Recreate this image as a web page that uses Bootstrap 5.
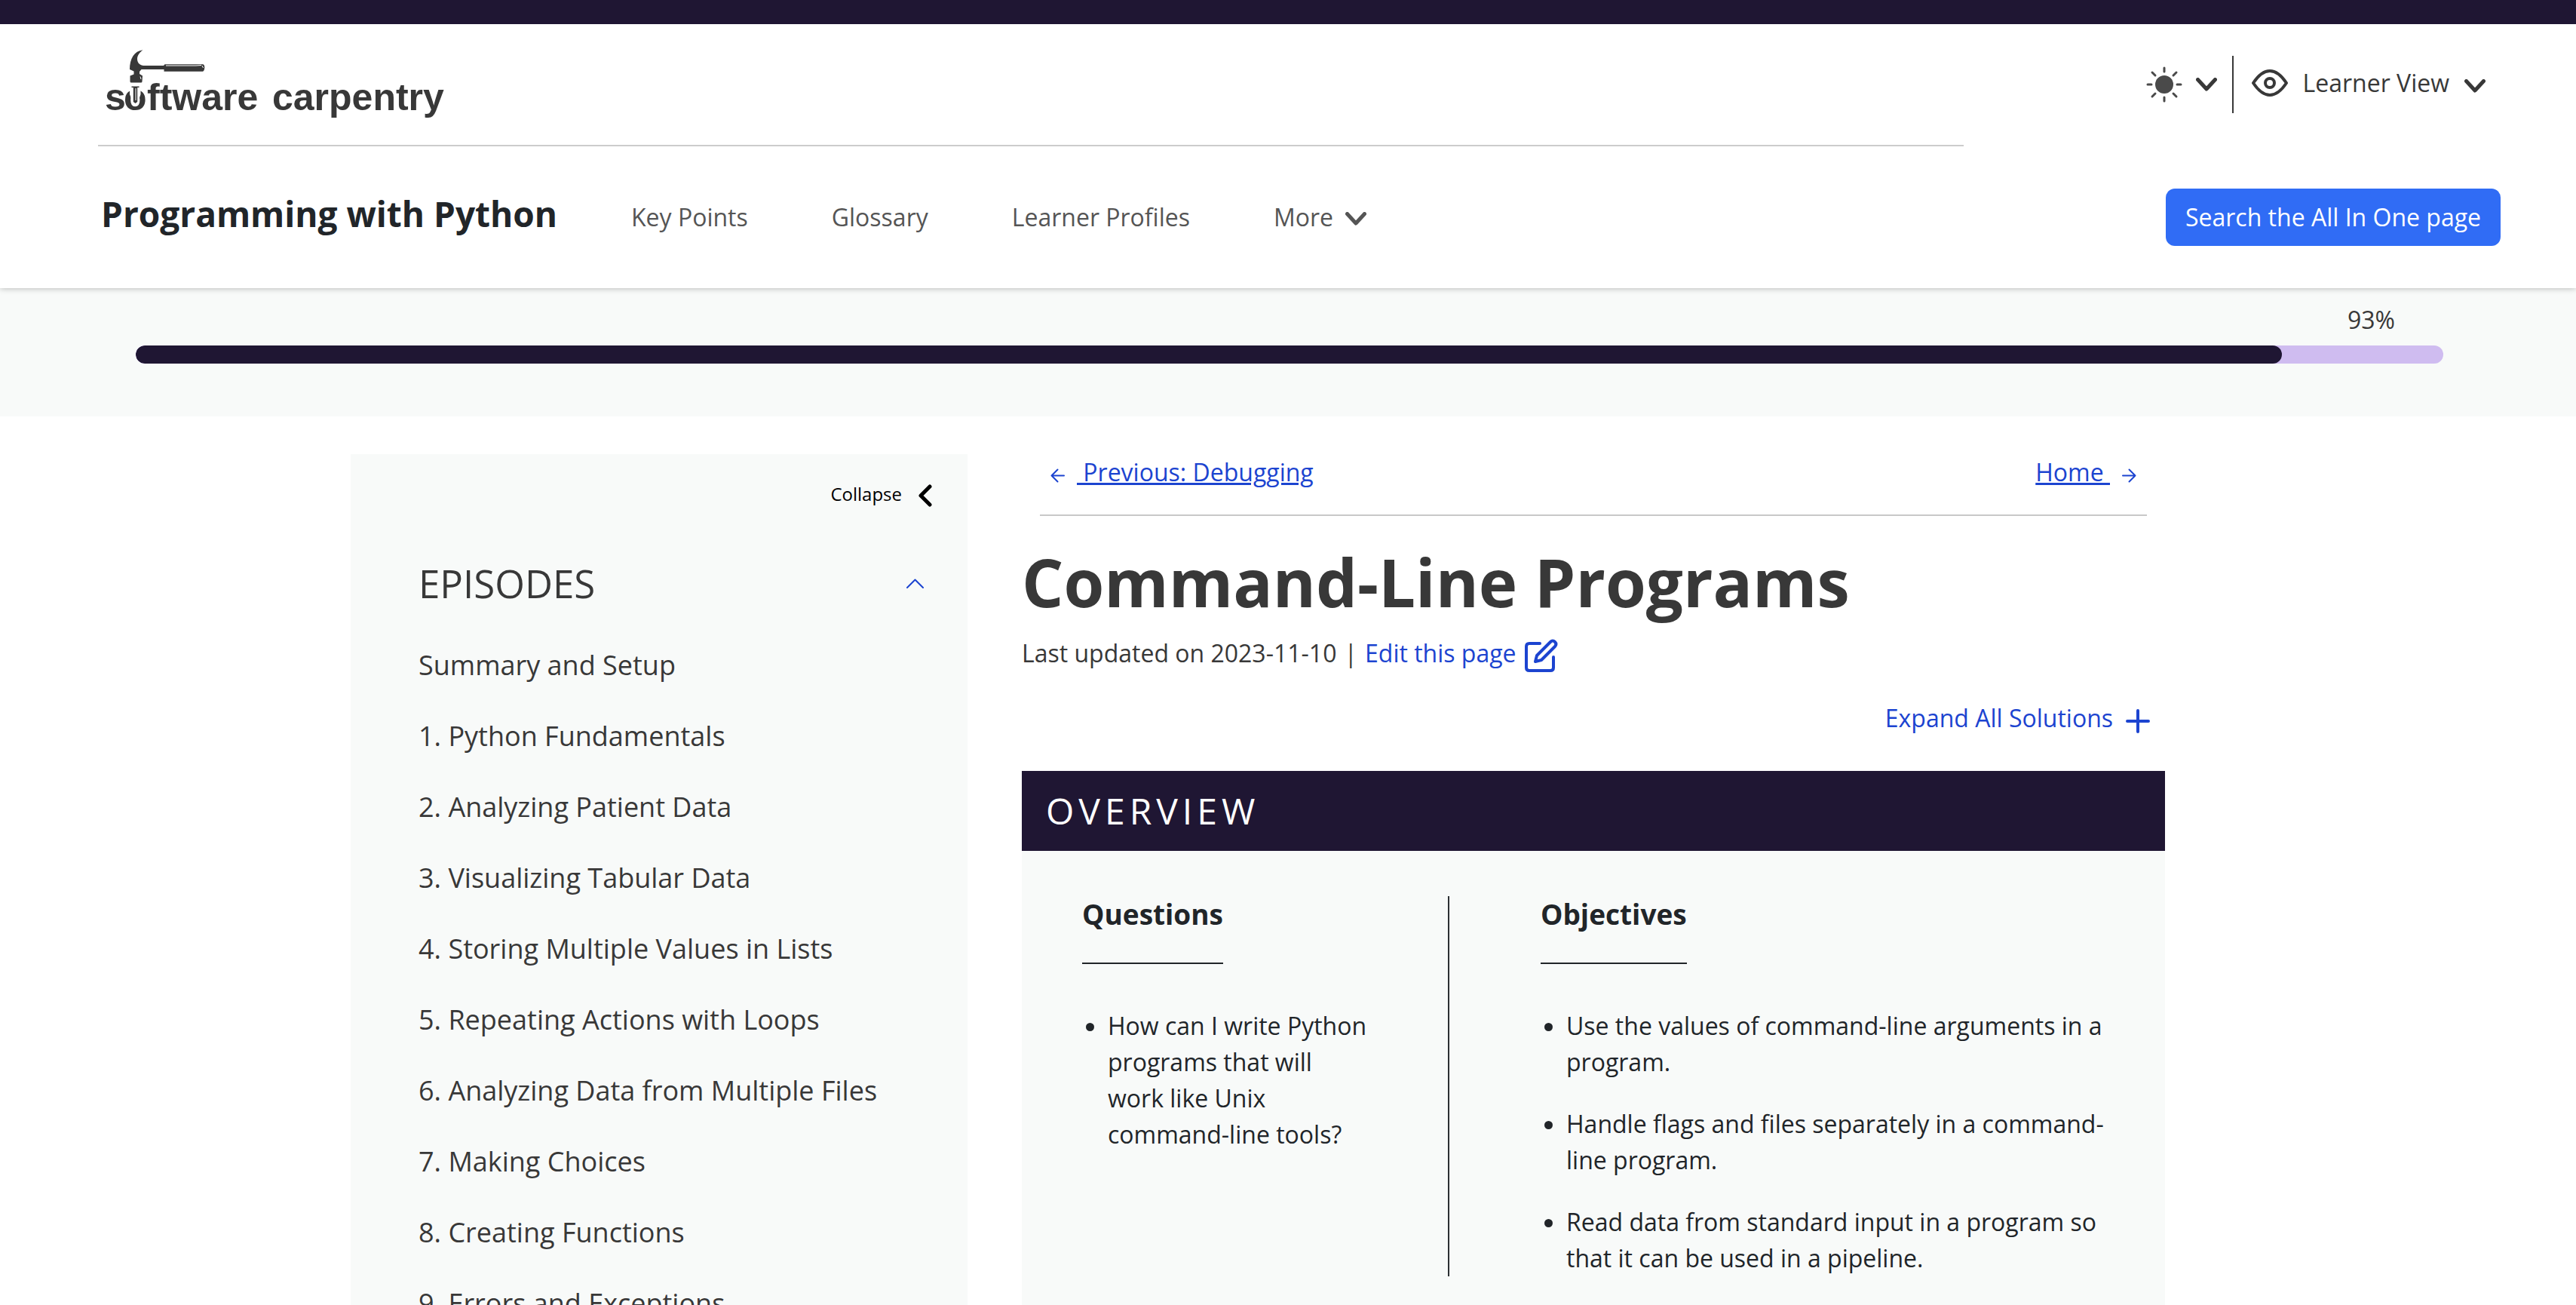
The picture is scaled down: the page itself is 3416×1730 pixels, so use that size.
<!DOCTYPE html>
<html lang="en">
<head>
<meta charset="utf-8">
<meta name="viewport" content="width=device-width, initial-scale=1">
<title>Programming with Python: Command-Line Programs</title>
<link href="https://cdn.jsdelivr.net/npm/bootstrap@5.3.0/dist/css/bootstrap.min.css" rel="stylesheet">
<style>
:root{--ink:#383838;--night:#1f1633;--mist:#f8faf9;--link:#1c44d0}
body{font-family:"Open Sans","Noto Sans",sans-serif;font-size:32px;line-height:48px;color:var(--ink)}
svg{flex:none;display:block}
.btn{font-size:inherit;line-height:inherit;color:inherit}
.ln{fill:none;stroke:currentColor;stroke-linecap:round;stroke-linejoin:round}

.site-header{border-top:32px solid var(--night);box-shadow:0 0 8px rgba(0,0,0,.3);position:relative;z-index:2}
.brand-row{padding:0 120px 0 130px}
.brand-line{border-bottom:2px solid #ccc;height:162px;margin-right:242px}
.tools{height:160px}
.tools .theme{gap:18px;padding:0 20px 0 0}
.tools .view{gap:20px;padding:0 0 4px 24px}
.tools .rule{width:2px;height:76px;background:var(--ink)}
.nav-row{padding:0 100px 0 134px;height:188px}
.lesson-title{font-size:46px;line-height:56px;font-weight:700;color:#212529;padding-bottom:10px;margin-right:98px}
.main-links{gap:111px}
.main-links a,.main-links .btn{color:#555;text-decoration:none;padding:0;border:0}
.btn-find{background:#306cf5;color:#fff;font-weight:500;border:0;border-radius:12px;padding:14px 26px}

.progress-strip{background:var(--mist);padding:18px 176px 70px 180px}
.progress-strip .pct{padding-right:64px;margin-bottom:10px}
.progress{height:24px;border-radius:12px;background:#cfbcf0}
.progress-bar{background:var(--night);border-radius:12px}

.page-main{max-width:2640px;padding:50px 157px 0 77px;gap:72px}
.side{flex:0 0 818px;background:var(--mist);padding:35px 0 80px 90px}
.collapse-btn{font-size:24px;line-height:36px;color:#000;gap:22px;margin-right:47px}
.side-head{margin:70px 58px 52px 0}
.side-head h2{font-size:51px;line-height:60px;font-weight:400;margin:0}
.side ul a{display:block;font-size:36px;line-height:54px;margin-bottom:40px;color:var(--ink);text-decoration:none}

.pager{margin:0 24px;padding:0 14px 32px;border-bottom:2px solid #c8c8c8}
.pager a{color:var(--link);text-decoration-thickness:3px;text-underline-offset:2px}
.pager svg{color:var(--link);margin-top:8px}
h1.chapter{font-size:87px;line-height:104px;font-weight:700;margin:35px 0 19px}
.updated{gap:10px;height:48px}
.edit{color:var(--link);text-decoration:none;gap:11px}
.edit svg{margin-top:6px}
.expand{color:var(--link);gap:17px;margin:38px 20px 46px 0}
.expand svg{margin-top:8px}
.over-head{background:var(--night);color:#fff;font-size:48px;line-height:58px;font-weight:400;letter-spacing:6px;padding:24px 32px;margin:0}
.over-body{background:var(--mist);color:#212529;padding:60px 71px 80px 80px}
.over-body h3{display:inline-block;font-size:37px;line-height:48px;font-weight:700;padding-bottom:40px;border-bottom:2px solid #212529;margin:0 0 58px}
.over-body ul{padding-left:34px;margin:0}
.over-body li+li{margin-top:34px}
.questions{flex:0 0 487px;border-right:2px solid #2c3033;padding-right:104px;margin-right:121px}
</style>
</head>
<body class="vh-100 overflow-hidden bg-white">

<header class="site-header bg-white">
  <div class="brand-row d-flex">
    <div class="brand-line flex-grow-1 d-flex align-items-center">
      <a href="#" aria-label="Software Carpentry">
        <svg width="470" height="115" viewBox="0 0 470 115">
          <g font-family="Liberation Sans, Arial, sans-serif" font-weight="700" font-size="50" fill="#383838">
            <text y="91"><tspan x="9">s</tspan><tspan x="34">o</tspan><tspan x="65">ftware</tspan><tspan x="231">carpentry</tspan></text>
          </g>
          <path d="M42 56H56.500V70L52.500 82H46.500L42 70Z" fill="#fff"/>
          <path d="M44.500 59.500H54.500V61H52.200V80L49.500 82 46.800 80V61H44.500Z" fill="#383838"/>
          <path d="M50 62V78" stroke="#fff" stroke-width="1"/>
          <path d="M59.500 11.300C48 12.500 42 23 42 37L47.500 39.500V43.500L42.500 45.500V53Q42.500 54.500 44 54.500H57Q58.500 54.500 58.500 53L59 45.500 55 43V40L57.500 37H87.500V39.700H139Q141.300 38.500 141.300 34 141 30.500 139 30.300H88.500L87 32H60C54 31 52 27 52 23 52 18 56 14 59.500 11.300Z" fill="#383838"/>
          <path d="M90 32H130L137 31.500M138 32L139.500 35M56 46.500L57 50" stroke="#fff" stroke-width="1" fill="none"/>
        </svg>
      </a>
    </div>
    <div class="tools d-flex align-items-center">
      <button type="button" class="btn theme border-0 d-flex align-items-center" aria-label="Theme">
        <svg width="48" height="48" viewBox="0 0 48 48" class="ln" stroke-width="3" color="#4a4a4a"><circle cx="24" cy="24" r="12" fill="currentColor" stroke="none"/><path d="M24 2V7M24 41V46M2 24H7M41 24H46M8 8L12 12M36 36L40 40M8 40L12 36M36 12L40 8"/></svg>
        <svg width="28" height="18" viewBox="0 0 28 18"><path class="ln" stroke-width="5" d="M2.500 2.500L14 15 25.500 2.500"/></svg>
      </button>
      <div class="rule"></div>
      <button type="button" class="btn view border-0 d-flex align-items-center">
        <svg width="48" height="36" viewBox="0 0 48 36" class="ln" stroke-width="4"><path d="M2 18C8 9 15 2 24 2S40 9 46 18C40 27 33 34 24 34S8 27 2 18Z"/><circle cx="24" cy="18" r="6"/></svg>
        <span>Learner View</span>
        <svg class="mt-2" width="28" height="18" viewBox="0 0 28 18"><path class="ln" stroke-width="5" d="M2.500 2.500L14 15 25.500 2.500"/></svg>
      </button>
    </div>
  </div>
  <div class="nav-row d-flex align-items-center">
    <div class="lesson-title">Programming with Python</div>
    <nav class="main-links d-flex align-items-center flex-grow-1">
      <a href="#">Key Points</a>
      <a href="#">Glossary</a>
      <a href="#">Learner Profiles</a>
      <button type="button" class="btn d-flex align-items-center gap-3">More
        <svg class="mt-1" width="28" height="18" viewBox="0 0 28 18"><path class="ln" stroke-width="5" d="M2.500 2.500L14 15 25.500 2.500"/></svg>
      </button>
    </nav>
    <button type="button" class="btn btn-find">Search the All In One page</button>
  </div>
</header>

<section class="progress-strip">
  <div class="pct text-end">93%</div>
  <div class="progress" role="progressbar" aria-label="Lesson progress" aria-valuenow="93" aria-valuemin="0" aria-valuemax="100">
    <div class="progress-bar" style="width:93%"></div>
  </div>
</section>

<div class="page-main mx-auto d-flex">
  <aside class="side">
    <button type="button" class="btn collapse-btn p-0 border-0 d-flex align-items-center ms-auto">Collapse
      <svg class="mt-1" width="18" height="30" viewBox="0 0 18 30"><path class="ln" stroke-width="5" d="M15 3L3 15 15 27"/></svg>
    </button>
    <div class="side-head d-flex align-items-center justify-content-between">
      <h2>EPISODES</h2>
      <svg width="23" height="13" viewBox="0 0 23 13" color="#1c44d0"><path class="ln" stroke-width="2" d="M1 12L11.500 1.500 22 12"/></svg>
    </div>
    <ul class="list-unstyled m-0">
      <li><a href="#">Summary and Setup</a></li>
      <li><a href="#">1. Python Fundamentals</a></li>
      <li><a href="#">2. Analyzing Patient Data</a></li>
      <li><a href="#">3. Visualizing Tabular Data</a></li>
      <li><a href="#">4. Storing Multiple Values in Lists</a></li>
      <li><a href="#">5. Repeating Actions with Loops</a></li>
      <li><a href="#">6. Analyzing Data from Multiple Files</a></li>
      <li><a href="#">7. Making Choices</a></li>
      <li><a href="#">8. Creating Functions</a></li>
      <li><a href="#">9. Errors and Exceptions</a></li>
    </ul>
  </aside>

  <main class="flex-grow-1">
    <nav class="pager d-flex align-items-center">
      <svg width="19" height="19" viewBox="0 0 19 19"><path class="ln" stroke-width="2" d="M18 9.500H1.500M9.500 1.500L1.500 9.500 9.500 17.500"/></svg>
      <a class="ms-3" href="#">&nbsp;Previous: Debugging</a>
      <a class="ms-auto me-3" href="#">Home&nbsp;</a>
      <svg width="19" height="19" viewBox="0 0 19 19"><path class="ln" stroke-width="2" d="M1 9.500H17.500M9.500 1.500L17.500 9.500 9.500 17.500"/></svg>
    </nav>
    <h1 class="chapter">Command-Line Programs</h1>
    <div class="updated d-flex align-items-center">
      <span>Last updated on 2023-11-10</span><span>|</span>
      <a href="#" class="edit d-flex align-items-center">Edit this page
        <svg width="44" height="44" viewBox="0 0 44 44"><path class="ln" stroke-width="4" d="M20 6H6Q2 6 2 10V38Q2 42 6 42H34Q38 42 38 38V24"/><path class="ln" stroke-width="4" d="M34 4Q37 1 40 4 43 7 40 10L22 28 14 30 16 22Z"/></svg>
      </a>
    </div>
    <button type="button" class="btn expand p-0 border-0 d-flex align-items-center ms-auto">Expand All Solutions
      <svg width="32" height="32" viewBox="0 0 32 32"><path class="ln" stroke-width="4" d="M16 2V30M2 16H30"/></svg>
    </button>
    <section>
      <h2 class="over-head">OVERVIEW</h2>
      <div class="over-body d-flex">
        <div class="questions">
          <h3>Questions</h3>
          <ul><li>How can I write Python programs that will work like Unix command-line tools?</li></ul>
        </div>
        <div class="flex-grow-1">
          <h3>Objectives</h3>
          <ul>
            <li>Use the values of command-line arguments in a program.</li>
            <li>Handle flags and files separately in a command-line program.</li>
            <li>Read data from standard input in a program so that it can be used in a pipeline.</li>
          </ul>
        </div>
      </div>
    </section>
  </main>
</div>
<script src="https://cdn.jsdelivr.net/npm/bootstrap@5.3.0/dist/js/bootstrap.bundle.min.js"></script>
</body>
</html>
